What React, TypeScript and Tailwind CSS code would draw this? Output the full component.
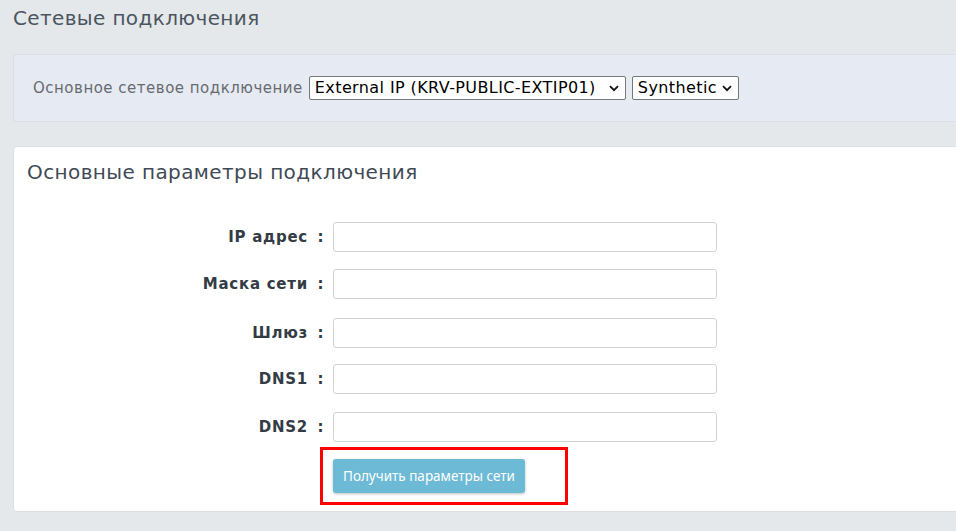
import React from 'react';

const FIELDS = [
  { label: 'IP адрес', mt: 'mt-0' },
  { label: 'Маска сети', mt: 'mt-[17px]' },
  { label: 'Шлюз', mt: 'mt-[19px]' },
  { label: 'DNS1', mt: 'mt-[16px]' },
  { label: 'DNS2', mt: 'mt-[18px]' },
];

function Chevron() {
  return (
    <svg width="10" height="7" viewBox="0 0 10 7" className="absolute right-[7px] top-[9px] pointer-events-none">
      <path d="M1 1.2 L5 5.2 L9 1.2" fill="none" stroke="#111" strokeWidth="1.8" />
    </svg>
  );
}

function Select({ value, width }: { value: string; width: string }) {
  return (
    <div className={`relative ${width} h-[24px]`}>
      <select
        defaultValue={value}
        className="appearance-none w-full h-full bg-white border border-[#767676] rounded-[2px] pl-[5px] pr-[20px] text-[16px] tracking-[0.4px] text-black leading-none"
      >
        <option>{value}</option>
      </select>
      <Chevron />
    </div>
  );
}

function App() {
  return (
    <div className="min-h-screen w-[956px] h-[531px] overflow-hidden bg-[#e4e8ea] font-['DejaVu_Sans',sans-serif]">
      <h1 className="pl-[13px] pt-[5px] text-[20px] tracking-[0.37px] text-[#4b5560] leading-[26px]">Сетевые подключения</h1>

      {/* Connection selector */}
      <div className="ml-[13px] mt-[23px] w-[960px] h-[68px] bg-[#e6eaf3] border border-[#dadee3] rounded-[4px] flex items-center pl-[19px] gap-[6px]">
        <span className="text-[15px] text-[#666b70] tracking-[0.5px]">Основное сетевое подключение</span>
        <Select value="External IP (KRV-PUBLIC-EXTIP01)" width="w-[317px]" />
        <Select value="Synthetic" width="w-[107px]" />
      </div>

      {/* Main params */}
      <div className="ml-[13px] mt-[24px] w-[960px] h-[366px] bg-white border border-[#dcdfe2] rounded-[4px]">
        <h2 className="pl-[13px] pt-[12px] text-[20px] tracking-[0.4px] text-[#3f4a56] leading-[26px]">Основные параметры подключения</h2>
        <div className="mt-[37px] flex flex-col">
          {FIELDS.map((f) => (
            <div key={f.label} className={`flex items-center ${f.mt}`}>
              <div className="w-[294px] text-right text-[15px] font-bold tracking-[0.75px] text-[#333b44]">{f.label}</div>
              <div className="w-[25px] text-center text-[15px] font-bold text-[#333b44]">:</div>
              <input type="text" className="w-[384px] h-[30px] border border-[#d0d3d6] rounded-[3px] outline-none" />
            </div>
          ))}
        </div>
        <div className="ml-[306px] mt-[5px] w-[248px] h-[58px] border-[3px] border-[#ff0000] flex items-center pl-[10px]">
          <button className="h-[34px] px-[10px] bg-[#6cbad6] rounded-[3px] shadow-[0_1px_3px_rgba(0,0,0,0.25)] text-white text-[13.5px] font-['Noto_Sans',sans-serif]">
            Получить параметры сети
          </button>
        </div>
      </div>
    </div>
  );
}

export default App;
